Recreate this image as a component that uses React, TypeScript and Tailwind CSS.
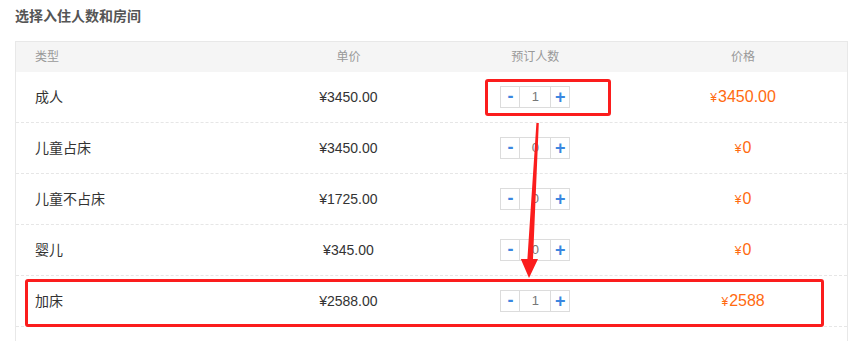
import React from 'react';

type Row = {
  type: string;
  unit: string;
  qty: number;
  total: string;
};

const rows: Row[] = [
  { type: '成人', unit: '¥3450.00', qty: 1, total: '3450.00' },
  { type: '儿童占床', unit: '¥3450.00', qty: 0, total: '0' },
  { type: '儿童不占床', unit: '¥1725.00', qty: 0, total: '0' },
  { type: '婴儿', unit: '¥345.00', qty: 0, total: '0' },
  { type: '加床', unit: '¥2588.00', qty: 1, total: '2588' },
];

/** 数量加减器 */
function Stepper({ value }: { value: number }) {
  return (
    <div className="flex h-[22px] w-[70px] border border-[#dcdcdc] bg-white">
      <button className="flex w-[19px] items-center justify-center border-r border-[#dcdcdc] pb-[2px] text-[18px] font-bold leading-none text-[#3b86e0]">
        -
      </button>
      <div className="flex flex-1 items-center justify-center text-[13px] text-[#777]">
        {value}
      </div>
      <button className="flex w-[19px] items-center justify-center border-l border-[#dcdcdc] text-[18px] font-bold leading-none text-[#3b86e0]">
        +
      </button>
    </div>
  );
}

export default function App() {
  return (
    <div
      className="relative h-[341px] w-[862px] overflow-hidden bg-white"
      style={{ fontFamily: '"Liberation Sans", "Noto Sans CJK SC", sans-serif' }}
    >
      {/* 标题 */}
      <div className="px-[15px] pt-[6px] text-[14px] font-bold leading-[20px] text-[#555]">
        选择入住人数和房间
      </div>

      {/* 表格 */}
      <div className="ml-[15px] mt-[15px] h-[400px] w-[833px] border-x border-t border-[#e8e8e8]">
        <div className="grid h-[30px] grid-cols-[30fr_20fr_25fr_25fr] items-center bg-[#f5f5f5] text-[12px] text-[#999]">
          <div className="pl-[19px]">类型</div>
          <div className="text-center">单价</div>
          <div className="text-center">预订人数</div>
          <div className="text-center">价格</div>
        </div>

        {rows.map((r) => (
          <div
            key={r.type}
            className="grid h-[51px] grid-cols-[30fr_20fr_25fr_25fr] items-center border-b border-dashed border-[#e6e6e6] text-[14px] text-[#333]"
          >
            <div className="pl-[19px]">{r.type}</div>
            <div className="text-center">{r.unit}</div>
            <div className="flex justify-center">
              <Stepper value={r.qty} />
            </div>
            <div className="text-center text-[#ff6a10]">
              <span className="mr-[1px] text-[12px]">¥</span>
              <span className="text-[16px]">{r.total}</span>
            </div>
          </div>
        ))}
      </div>

      {/* 标注 */}
      <div className="absolute left-[485px] top-[79px] h-[37px] w-[126px] rounded-[3px] border-[3px] border-[#fb1d1d]" />
      <div className="absolute left-[25px] top-[279px] h-[48px] w-[799px] rounded-[3px] border-[3px] border-[#fb1d1d]" />
      <svg className="absolute left-0 top-0" width="862" height="341">
        <polygon
          points="536.4,123 538.8,123 533,259 538,259 529,278 520.8,259 527.4,259"
          fill="#fb1d1d"
        />
      </svg>
    </div>
  );
}
